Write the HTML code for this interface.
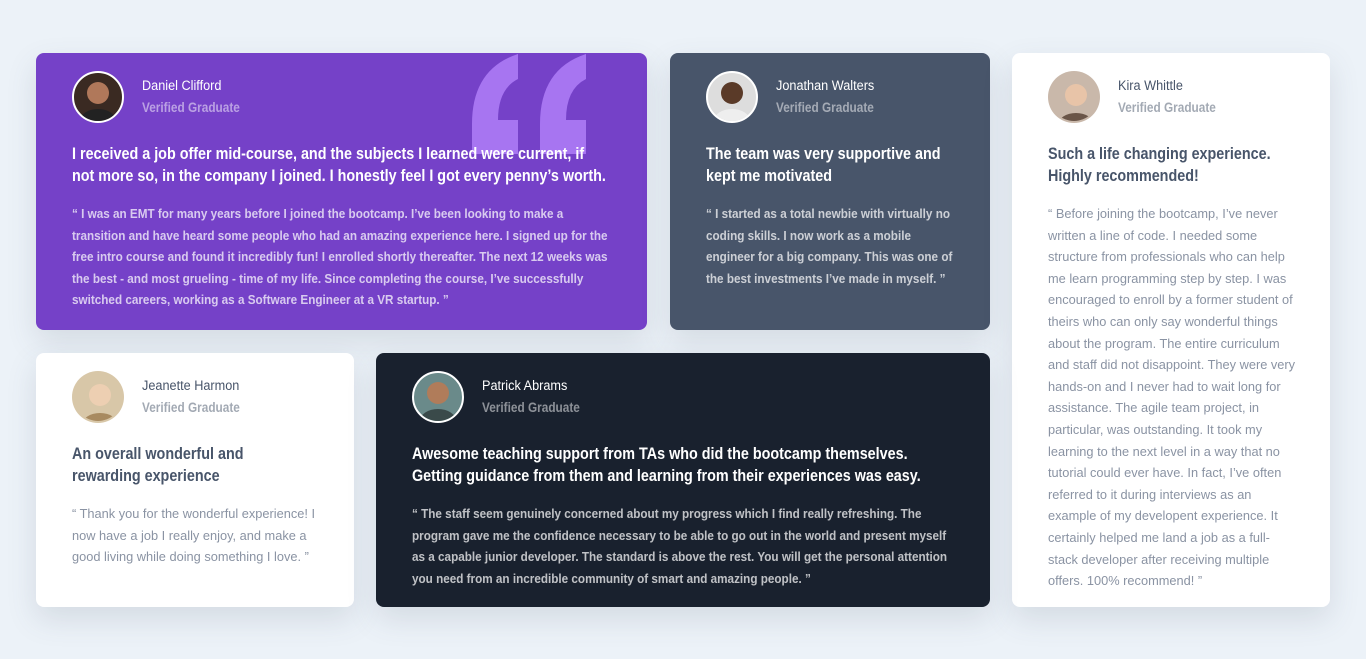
<!DOCTYPE html>
<html><head><meta charset="utf-8">
<style>
*{margin:0;padding:0;box-sizing:border-box}
body{width:1366px;height:659px;background:#ecf2f8;font-family:"Liberation Sans",sans-serif;position:relative;overflow:hidden}
.c{position:absolute;border-radius:8px;padding:18px 36px;white-space:nowrap}
.sh{box-shadow:0 12px 30px rgba(72,85,106,.15)}
.hd{display:flex;align-items:center;height:52px;position:relative}
.av{width:52px;height:52px;border-radius:50%;border:2px solid #fff;overflow:hidden;flex:none;margin-right:18px}
.nm{font-size:13.5px;line-height:22px;transform:scaleX(.94);transform-origin:left}
.vg{font-size:13.5px;line-height:22px;font-weight:bold;opacity:.5;transform:scaleX(.875);transform-origin:left}
h2{font-size:16.5px;line-height:22px;margin-top:20px;font-weight:bold;transform:scaleX(.87);transform-origin:left;position:relative}
p{font-size:12.8px;line-height:21.6px;margin-top:16px;font-weight:bold;transform:scaleX(.915);transform-origin:left}
.w{background:#fff;color:#48556a}
.w p{color:#8a93a3;font-weight:normal;transform:none}
.w .vg{color:#48556a}
.d p{opacity:.72}
</style></head><body>

<div class="c sh d" style="left:36px;top:53px;width:611px;height:277px;background:#7541c8;color:#fff">
<svg style="position:absolute;left:436px;top:1px" width="116" height="100" viewBox="0 0 116 100"><path fill="#a775f1" d="M46 0L46 25Q26 35 26 66L46 66L46 100L0 100L0 70Q0 15 46 0ZM114 0L114 25Q94 35 94 66L114 66L114 100L68 100L68 70Q68 15 114 0Z"/></svg>
<div class="hd"><div class="av" style="background:#3a2a22"><svg width="48" height="48"><circle cx="24" cy="20" r="11" fill="#b0785a"/><ellipse cx="24" cy="48" rx="18" ry="12" fill="#222"/></svg></div><div><div class="nm">Daniel Clifford</div><div class="vg">Verified Graduate</div></div></div>
<h2>I received a job offer mid-course, and the subjects I learned were current, if<br>not more so, in the company I joined. I honestly feel I got every penny’s worth.</h2>
<p>“ I was an EMT for many years before I joined the bootcamp. I’ve been looking to make a<br>transition and have heard some people who had an amazing experience here. I signed up for the<br>free intro course and found it incredibly fun! I enrolled shortly thereafter. The next 12 weeks was<br>the best - and most grueling - time of my life. Since completing the course, I’ve successfully<br>switched careers, working as a Software Engineer at a VR startup. ”</p>
</div>

<div class="c sh d" style="left:670px;top:53px;width:320px;height:277px;background:#48556a;color:#fff">
<div class="hd"><div class="av" style="background:#ddd"><svg width="48" height="48"><circle cx="24" cy="20" r="11" fill="#5a3a28"/><ellipse cx="24" cy="48" rx="18" ry="12" fill="#eee"/></svg></div><div><div class="nm">Jonathan Walters</div><div class="vg">Verified Graduate</div></div></div>
<h2>The team was very supportive and<br>kept me motivated</h2>
<p>“ I started as a total newbie with virtually no<br>coding skills. I now work as a mobile<br>engineer for a big company. This was one of<br>the best investments I’ve made in myself. ”</p>
</div>

<div class="c sh w" style="left:1012px;top:53px;width:318px;height:554px">
<div class="hd"><div class="av" style="border-color:transparent;background:#c9b8aa"><svg width="52" height="52"><circle cx="26" cy="22" r="11" fill="#e8c4a8"/><ellipse cx="26" cy="52" rx="18" ry="12" fill="#6a5548"/></svg></div><div><div class="nm">Kira Whittle</div><div class="vg">Verified Graduate</div></div></div>
<h2>Such a life changing experience.<br>Highly recommended!</h2>
<p>“ Before joining the bootcamp, I’ve never<br>written a line of code. I needed some<br>structure from professionals who can help<br>me learn programming step by step. I was<br>encouraged to enroll by a former student of<br>theirs who can only say wonderful things<br>about the program. The entire curriculum<br>and staff did not disappoint. They were very<br>hands-on and I never had to wait long for<br>assistance. The agile team project, in<br>particular, was outstanding. It took my<br>learning to the next level in a way that no<br>tutorial could ever have. In fact, I’ve often<br>referred to it during interviews as an<br>example of my developent experience. It<br>certainly helped me land a job as a full-<br>stack developer after receiving multiple<br>offers. 100% recommend! ”</p>
</div>

<div class="c sh w" style="left:36px;top:353px;width:318px;height:254px">
<div class="hd"><div class="av" style="border-color:transparent;background:#d8c7a8"><svg width="52" height="52"><circle cx="26" cy="22" r="11" fill="#edcfb2"/><ellipse cx="26" cy="52" rx="18" ry="12" fill="#a88a60"/></svg></div><div><div class="nm">Jeanette Harmon</div><div class="vg">Verified Graduate</div></div></div>
<h2>An overall wonderful and<br>rewarding experience</h2>
<p>“ Thank you for the wonderful experience! I<br>now have a job I really enjoy, and make a<br>good living while doing something I love. ”</p>
</div>

<div class="c sh d" style="left:376px;top:353px;width:614px;height:254px;background:#19212e;color:#fff">
<div class="hd"><div class="av" style="background:#6a8a8a"><svg width="48" height="48"><circle cx="24" cy="20" r="11" fill="#b07c5a"/><ellipse cx="24" cy="48" rx="18" ry="12" fill="#3a4a4a"/></svg></div><div><div class="nm">Patrick Abrams</div><div class="vg">Verified Graduate</div></div></div>
<h2>Awesome teaching support from TAs who did the bootcamp themselves.<br>Getting guidance from them and learning from their experiences was easy.</h2>
<p>“ The staff seem genuinely concerned about my progress which I find really refreshing. The<br>program gave me the confidence necessary to be able to go out in the world and present myself<br>as a capable junior developer. The standard is above the rest. You will get the personal attention<br>you need from an incredible community of smart and amazing people. ”</p>
</div>

</body></html>
